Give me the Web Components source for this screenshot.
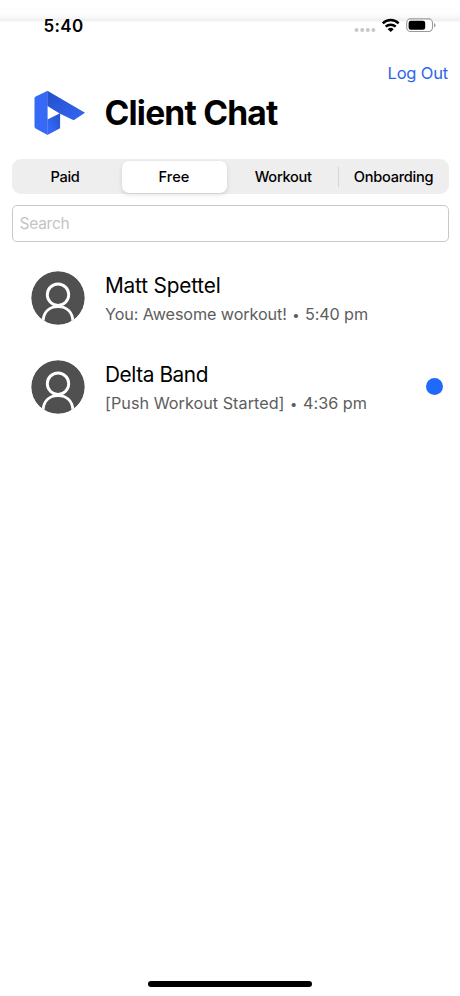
<!DOCTYPE html>
<html lang="en">
<head>
<meta charset="utf-8">
<title>Client Chat</title>
<style>
html,body{margin:0;height:100%;background:#fff}
body{font-family:Inter,"Liberation Sans",sans-serif;color:#000;overflow:hidden}
</style>
</head>
<body>
<chat-app></chat-app>
<script>
function define(name, html, setup) {
  customElements.define(name, class extends HTMLElement {
    connectedCallback() {
      if (this.shadowRoot) return;
      this.attachShadow({mode: 'open'}).innerHTML = html;
      if (setup) setup(this, this.shadowRoot);
    }
  });
}

/* A line of text whose tracking is adjusted to fill the given width. */
define('tracked-text', `<style>
:host{display:inline-block;white-space:pre;vertical-align:top}
span{display:inline-block}
</style><span><slot></slot></span>`, (el, root) => {
  const w = parseFloat(el.getAttribute('w'));
  const s = root.querySelector('span');
  const n = el.textContent.length;
  const natural = s.getBoundingClientRect().width;
  s.style.letterSpacing = ((w - natural) / n).toFixed(4) + 'px';
});

define('status-bar', `<style>
:host{display:flex;height:50px;box-sizing:border-box;padding:16px 24px 0 43.5px;justify-content:space-between;align-items:flex-start;
background:linear-gradient(#fff 0,#fefefe 13px,#f9f9f9 17px,#efefef 20px,#f3f3f3 21px,#fefefe 22px,#fff 24px)}
.time{font-size:17px;line-height:20px;font-weight:600}
svg{display:block}
</style>
<div class="time"><tracked-text w="40">5:40</tracked-text></div>
<svg width="84" height="20" viewBox="352 16 84 20">
<g fill="#c8c8c8"><circle cx="356.5" cy="30" r="2"/><circle cx="362.2" cy="30" r="2"/><circle cx="367.8" cy="30" r="2"/><circle cx="373.4" cy="30" r="2"/></g>
<g fill="none" stroke="#000" stroke-width="2.5"><path d="M382.8 23.3a11.4 11.4 0 0 1 15.8 0"/><path d="M385.7 26.7a7.2 7.2 0 0 1 10 0"/></g>
<path d="M387.7 29.2a4.3 4.3 0 0 1 6 0L390.7 32z"/>
<rect x="406.7" y="18.9" width="25.8" height="12.6" rx="4" fill="#fff" stroke="#999" stroke-width="1.1"/>
<rect x="408.6" y="20.7" width="16.6" height="9" rx="2.3"/>
<path d="M434 23.2c2.1.7 2.1 3.3 0 4z" fill="#999"/>
</svg>`);

define('brand-logo', `<style>:host{display:block;width:52px;height:46px}svg{display:block}</style>
<svg width="52" height="46" viewBox="33.8 90 52 46">
<defs>
<linearGradient id="a" x1="0" y1="0" x2="1" y2="1"><stop stop-color="#2450c8"/><stop offset=".55" stop-color="#2c5ce0"/><stop offset="1" stop-color="#3366f4"/></linearGradient>
<linearGradient id="b" x1="1" y1="0" x2="0" y2="1"><stop stop-color="#2450c9"/><stop offset=".7" stop-color="#3467f5"/></linearGradient>
</defs>
<path d="M47.4 90.7L35.6 96.6Q34.3 97.3 34.3 98.6V126.5Q34.3 127.8 35.4 128.4L47.4 135z" fill="#3569f6"/>
<path d="M47.2 119.6L59.9 113.2V128.2L47.2 135z" fill="url(#b)"/>
<path d="M47.2 90.7L84.8 112.8 73.5 120.3 59.9 113.8 47.2 106z" fill="url(#a)"/>
</svg>`);

define('page-header', `<style>
:host{display:flex;flex-direction:column;padding:12px 12px 0 33.5px}
.out{align-self:flex-end;font-size:16.5px;line-height:22px;color:#2c66ea}
.row{display:flex;align-items:center;gap:19px;height:46px;margin-top:6px}
h1{margin:0;font-size:33.6px;line-height:40px;font-weight:650}
</style>
<div class="out"><tracked-text w="60.5">Log Out</tracked-text></div>
<div class="row"><brand-logo></brand-logo><h1><tracked-text w="173">Client Chat</tracked-text></h1></div>`);

define('segment-item', `<style>
:host{display:flex;align-items:center;justify-content:center;border-radius:7px;margin:2px 0;font-size:14.6px;line-height:20px;font-weight:460}
:host([selected]){background:#fff;box-shadow:0 2px 5px #0000001c,0 1px 1px #0000000a;font-weight:550;margin:2px 2.5px 2px 3px}
:host([rule]){border-left:1px solid #d5d5d5;border-radius:0;margin:8px 0}
</style><slot></slot>`);

define('segmented-control', `<style>
:host{display:grid;grid-template-columns:107px 110.5px 108.5px 1fr;box-sizing:border-box;height:35px;margin:23px 11.5px 0;border-radius:9px;background:#eee}
</style>
<segment-item><tracked-text w="29">Paid</tracked-text></segment-item>
<segment-item selected><tracked-text w="31">Free</tracked-text></segment-item>
<segment-item><tracked-text w="57">Workout</tracked-text></segment-item>
<segment-item rule><tracked-text w="79.5">Onboarding</tracked-text></segment-item>`);

define('search-field', `<style>
:host{display:flex;align-items:center;box-sizing:border-box;height:37.5px;margin:10.5px 11.5px 0;padding:1px 7px 0;border:1px solid #c9c9c9;border-radius:5px;font-size:15.5px;color:#c4c4c6}
</style><tracked-text w="50">Search</tracked-text>`);

define('user-avatar', `<style>:host{display:block;width:54px;height:54px;flex:none}svg{display:block}</style>
<svg width="54" height="54" viewBox="0 0 54 54"><defs><clipPath id="c"><circle cx="27" cy="27" r="26.7"/></clipPath></defs>
<g clip-path="url(#c)"><circle cx="27" cy="27" r="27" fill="#505050"/>
<g fill="none" stroke="#fff" stroke-width="2.9"><circle cx="27" cy="23.7" r="10.7"/><path d="M12 50.5C12.6 41 18.2 35.6 27 35.6S41.4 41 42 50.5"/></g></g></svg>`);

define('chat-row', `<style>
:host{display:flex;align-items:center;height:89px;padding:0 17px 0 31px}
.text{flex:1;margin-left:20px}
.name{font-size:20.8px;line-height:28px;height:28px;margin-top:2px}
.msg{font-size:16.2px;line-height:24px;height:24px;margin-top:2px;color:#5d5d5d}
.dot{display:none;width:17px;height:17px;border-radius:50%;background:#2169fb}
:host([unread]) .dot{display:block}
</style><user-avatar></user-avatar>
<div class="text"><div class="name"><slot name="name"></slot></div><div class="msg"><slot></slot></div></div><div class="dot"></div>`);

define('home-indicator', `<style>:host{display:block;width:164px;height:5.5px;border-radius:3px;background:#000;margin:auto auto 9.5px}</style>`);

define('chat-app', `<style>:host{display:flex;flex-direction:column;width:460px;height:996px;background:#fff}
main{margin-top:11px}
.sep{font-size:13px;padding:0 1px}</style>
<status-bar></status-bar>
<page-header></page-header>
<segmented-control></segmented-control>
<search-field></search-field>
<main>
<chat-row><tracked-text slot="name" w="115.5">Matt Spettel</tracked-text><tracked-text w="263">You: Awesome workout! <span class="sep">•</span> 5:40 pm</tracked-text></chat-row>
<chat-row unread><tracked-text slot="name" w="103">Delta Band</tracked-text><tracked-text w="262">[Push Workout Started] <span class="sep">•</span> 4:36 pm</tracked-text></chat-row>
</main>
<home-indicator></home-indicator>`);
</script>
</body>
</html>
